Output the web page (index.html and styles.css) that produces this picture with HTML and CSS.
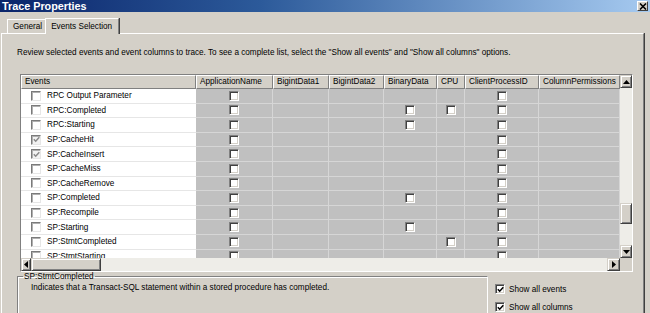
FILE: index.html
```html
<!DOCTYPE html>
<html>
<head>
<meta charset="utf-8">
<link rel="stylesheet" href="styles.css">
</head>
<body>
<div class="window">
  <div class="titlebar">
    <span class="title">Trace Properties</span>
    <span class="close"><svg width="8" height="7" viewBox="0 0 8 7"><path d="M1 0.5 L7 6.5 M7 0.5 L1 6.5" stroke="#000" stroke-width="1.6"/></svg></span>
  </div>
  <div class="tabs">
    <div class="tab">General</div>
    <div class="tab active">Events Selection</div>
  </div>
  <div class="panel">
    <p class="intro">Review selected events and event columns to trace. To see a complete list, select the "Show all events" and "Show all columns" options.</p>
    <div class="grid">
      <div class="grid-top">
        <div class="grid-main">
          <div class="hdr">
            <div class="hc w0">Events</div>
            <div class="hc w1">ApplicationName</div>
            <div class="hc w2">BigintData1</div>
            <div class="hc w3">BigintData2</div>
            <div class="hc w4">BinaryData</div>
            <div class="hc w5">CPU</div>
            <div class="hc w6">ClientProcessID</div>
            <div class="hc w7">ColumnPermissions</div>
          </div>
          <div class="rows">
            <div class="row"><div class="ev w0"><span class="ecb"></span>RPC Output Parameter</div><div class="gc w1"><span class="cb"></span></div><div class="gc w2"></div><div class="gc w3"></div><div class="gc w4"></div><div class="gc w5"></div><div class="gc w6"><span class="cb"></span></div><div class="gc w7"></div></div>
            <div class="row"><div class="ev w0"><span class="ecb"></span>RPC:Completed</div><div class="gc w1"><span class="cb"></span></div><div class="gc w2"></div><div class="gc w3"></div><div class="gc w4"><span class="cb"></span></div><div class="gc w5"><span class="cb"></span></div><div class="gc w6"><span class="cb"></span></div><div class="gc w7"></div></div>
            <div class="row"><div class="ev w0"><span class="ecb"></span>RPC:Starting</div><div class="gc w1"><span class="cb"></span></div><div class="gc w2"></div><div class="gc w3"></div><div class="gc w4"><span class="cb"></span></div><div class="gc w5"></div><div class="gc w6"><span class="cb"></span></div><div class="gc w7"></div></div>
            <div class="row"><div class="ev w0"><span class="ecb on"><svg width="7" height="7" viewBox="0 0 7 7"><path d="M0.8 3.2 L2.7 5.2 L6.3 1.2" fill="none" stroke="#8a8a8a" stroke-width="1.5"/></svg></span>SP:CacheHit</div><div class="gc w1"><span class="cb"></span></div><div class="gc w2"></div><div class="gc w3"></div><div class="gc w4"></div><div class="gc w5"></div><div class="gc w6"><span class="cb"></span></div><div class="gc w7"></div></div>
            <div class="row"><div class="ev w0"><span class="ecb on"><svg width="7" height="7" viewBox="0 0 7 7"><path d="M0.8 3.2 L2.7 5.2 L6.3 1.2" fill="none" stroke="#8a8a8a" stroke-width="1.5"/></svg></span>SP:CacheInsert</div><div class="gc w1"><span class="cb"></span></div><div class="gc w2"></div><div class="gc w3"></div><div class="gc w4"></div><div class="gc w5"></div><div class="gc w6"><span class="cb"></span></div><div class="gc w7"></div></div>
            <div class="row"><div class="ev w0"><span class="ecb"></span>SP:CacheMiss</div><div class="gc w1"><span class="cb"></span></div><div class="gc w2"></div><div class="gc w3"></div><div class="gc w4"></div><div class="gc w5"></div><div class="gc w6"><span class="cb"></span></div><div class="gc w7"></div></div>
            <div class="row"><div class="ev w0"><span class="ecb"></span>SP:CacheRemove</div><div class="gc w1"><span class="cb"></span></div><div class="gc w2"></div><div class="gc w3"></div><div class="gc w4"></div><div class="gc w5"></div><div class="gc w6"><span class="cb"></span></div><div class="gc w7"></div></div>
            <div class="row"><div class="ev w0"><span class="ecb"></span>SP:Completed</div><div class="gc w1"><span class="cb"></span></div><div class="gc w2"></div><div class="gc w3"></div><div class="gc w4"><span class="cb"></span></div><div class="gc w5"></div><div class="gc w6"><span class="cb"></span></div><div class="gc w7"></div></div>
            <div class="row"><div class="ev w0"><span class="ecb"></span>SP:Recompile</div><div class="gc w1"><span class="cb"></span></div><div class="gc w2"></div><div class="gc w3"></div><div class="gc w4"></div><div class="gc w5"></div><div class="gc w6"><span class="cb"></span></div><div class="gc w7"></div></div>
            <div class="row"><div class="ev w0"><span class="ecb"></span>SP:Starting</div><div class="gc w1"><span class="cb"></span></div><div class="gc w2"></div><div class="gc w3"></div><div class="gc w4"><span class="cb"></span></div><div class="gc w5"></div><div class="gc w6"><span class="cb"></span></div><div class="gc w7"></div></div>
            <div class="row"><div class="ev w0"><span class="ecb"></span>SP:StmtCompleted</div><div class="gc w1"><span class="cb"></span></div><div class="gc w2"></div><div class="gc w3"></div><div class="gc w4"></div><div class="gc w5"><span class="cb"></span></div><div class="gc w6"><span class="cb"></span></div><div class="gc w7"></div></div>
            <div class="row"><div class="ev w0"><span class="ecb"></span>SP:StmtStarting</div><div class="gc w1"><span class="cb"></span></div><div class="gc w2"></div><div class="gc w3"></div><div class="gc w4"></div><div class="gc w5"></div><div class="gc w6"><span class="cb"></span></div><div class="gc w7"></div></div>
          </div>
        </div>
        <div class="vscroll">
          <div class="sbtn"><svg width="7" height="4" viewBox="0 0 7 4"><path d="M3.5 0 L7 4 L0 4 Z" fill="#000"/></svg></div>
          <div class="vtrack">
            <div class="vthumb"></div>
          </div>
          <div class="sbtn"><svg width="7" height="4" viewBox="0 0 7 4"><path d="M0 0 L7 0 L3.5 4 Z" fill="#000"/></svg></div>
        </div>
      </div>
      <div class="hscroll">
        <div class="hbar">
          <div class="hbtn"><svg width="4" height="7" viewBox="0 0 4 7"><path d="M4 0 L4 7 L0 3.5 Z" fill="#000"/></svg></div>
          <div class="hthumb"></div>
          <div class="htrack"></div>
          <div class="hbtn"><svg width="4" height="7" viewBox="0 0 4 7"><path d="M0 0 L4 3.5 L0 7 Z" fill="#000"/></svg></div>
        </div>
        <div class="corner"></div>
      </div>
    </div>
    <div class="bottom">
      <fieldset class="group">
        <legend>SP:StmtCompleted</legend>
        <p class="desc">Indicates that a Transact-SQL statement within a stored procedure has completed.</p>
      </fieldset>
      <div class="opts">
        <div class="opt"><span class="ocb"><svg width="7" height="7" viewBox="0 0 7 7"><path d="M0.8 3.2 L2.7 5.2 L6.3 1.2" fill="none" stroke="#000" stroke-width="1.5"/></svg></span>Show all events</div>
        <div class="opt"><span class="ocb"><svg width="7" height="7" viewBox="0 0 7 7"><path d="M0.8 3.2 L2.7 5.2 L6.3 1.2" fill="none" stroke="#000" stroke-width="1.5"/></svg></span>Show all columns</div>
      </div>
    </div>
  </div>
</div>
</body>
</html>
```
FILE: styles.css
```css
html, body {
  margin: 0;
  padding: 0;
  background: #d4d0c8;
}
body {
  width: 650px;
  height: 313px;
  overflow: hidden;
  font-family: "Liberation Sans", Arial, sans-serif;
  font-size: 8.2px;
  color: #000;
}
.window {
  width: 650px;
  height: 313px;
  overflow: hidden;
}
.titlebar {
  height: 12px;
  display: flex;
  align-items: center;
  justify-content: space-between;
  background: linear-gradient(to right, #0a246a 0%, #2c5a9a 40%, #a6caf0 100%);
  padding: 0 2px 0 2px;
}
.title {
  color: #fff;
  font-weight: bold;
  font-size: 10.8px;
  line-height: 12px;
}
.close {
  width: 11px;
  height: 10px;
  box-sizing: border-box;
  background: #d4d0c8;
  border: 1px solid;
  border-color: #fff #404040 #404040 #fff;
  display: flex;
  align-items: center;
  justify-content: center;
}
.tabs {
  height: 21px;
  display: flex;
  align-items: flex-end;
  padding-left: 7px;
  position: relative;
  z-index: 2;
}
.tab {
  height: 13px;
  line-height: 13px;
  padding: 0 3px 0 5px;
  border: 1px solid;
  border-color: #fff #808080 transparent #fff;
  border-bottom: none;
  box-sizing: content-box;
}
.tab.active {
  height: 15px;
  line-height: 15px;
  margin-bottom: -1px;
  margin-left: -1px;
  padding: 0 6px 0 5px;
  background: #d4d0c8;
  box-shadow: 1px 0 0 #404040;
}
.panel {
  margin-left: 1px;
  width: 643px;
  height: 280px;
  box-sizing: border-box;
  border: 1px solid;
  border-bottom: none;
  border-color: #fff #808080 #808080 #fff;
  box-shadow: 1px 0 0 #404040;
  padding: 14px 0 0 15px;
}
.intro {
  margin: 0;
  line-height: 10px;
  white-space: nowrap;
}
.grid {
  margin: 16px 0 0 3px;
  width: 613px;
  box-sizing: border-box;
  border: 1px solid;
  border-color: #808080 #fff #fff #808080;
  box-shadow: inset 1px 1px 0 #404040;
  background: #fff;
}
.grid-top {
  display: flex;
}
.grid-main {
  width: 599px;
}
.hdr {
  display: flex;
  height: 14px;
}
.hc {
  box-sizing: border-box;
  height: 14px;
  line-height: 12px;
  padding-left: 3px;
  background: #d4d0c8;
  border: 1px solid;
  border-color: #fff #808080 #808080 #fff;
  white-space: nowrap;
  overflow: hidden;
}
.w0 { width: 175px; }
.w1 { width: 77px; }
.w2 { width: 56px; }
.w3 { width: 55px; }
.w4 { width: 53px; }
.w5 { width: 28px; }
.w6 { width: 74px; }
.w7 { width: 81px; }
.rows {
  height: 169px;
  overflow: hidden;
  background: #c0c0c0;
}
.row {
  display: flex;
  height: 14.6px;
}
.ev {
  box-sizing: border-box;
  background: #fff;
  border-bottom: 1px solid #e6e6e6;
  display: flex;
  align-items: center;
  padding-left: 10px;
  white-space: nowrap;
}
.gc {
  box-sizing: border-box;
  border-right: 1px solid #d6d6d6;
  border-bottom: 1px solid #d6d6d6;
  display: flex;
  align-items: center;
  justify-content: center;
}
.cb {
  width: 10px;
  height: 10px;
  box-sizing: border-box;
  background: #fff;
  border: 1px solid;
  border-color: #808080 #fff #fff #808080;
  box-shadow: inset 1px 1px 0 #404040, inset -1px -1px 0 #d4d0c8;
}
.ecb {
  width: 10px;
  height: 10px;
  box-sizing: border-box;
  background: #fff;
  border: 1px solid;
  border-color: #7a7a7a #e6e6e6 #e6e6e6 #7a7a7a;
  box-shadow: inset 1px 1px 0 #b0b0b0;
  margin-right: 6px;
  display: flex;
  align-items: center;
  justify-content: center;
  flex: none;
}
.ecb.on {
  background: #f2f2f2;
}
.vscroll {
  width: 12px;
  display: flex;
  flex-direction: column;
  background: #eeede8;
}
.sbtn, .hbtn {
  box-sizing: border-box;
  background: #d4d0c8;
  border: 1px solid;
  border-color: #d4d0c8 #404040 #404040 #d4d0c8;
  box-shadow: inset 1px 1px 0 #fff, inset -1px -1px 0 #808080;
  display: flex;
  align-items: center;
  justify-content: center;
  flex: none;
}
.sbtn {
  width: 12px;
  height: 13px;
}
.vtrack {
  flex: 1;
  padding-top: 115px;
}
.vthumb {
  height: 21px;
  box-sizing: border-box;
  background: #d4d0c8;
  border: 1px solid;
  border-color: #d4d0c8 #404040 #404040 #d4d0c8;
  box-shadow: inset 1px 1px 0 #fff, inset -1px -1px 0 #808080;
}
.hscroll {
  display: flex;
  height: 13px;
}
.hbar {
  width: 599px;
  display: flex;
  background: #eeede8;
}
.hbtn {
  width: 10px;
  height: 13px;
}
.hbtn:last-child {
  width: 13px;
}
.hthumb {
  width: 70px;
  box-sizing: border-box;
  background: #d4d0c8;
  border: 1px solid;
  border-color: #d4d0c8 #404040 #404040 #d4d0c8;
  box-shadow: inset 1px 1px 0 #fff, inset -1px -1px 0 #808080;
}
.htrack {
  flex: 1;
}
.corner {
  width: 12px;
  background: #d4d0c8;
}
.bottom {
  display: flex;
  align-items: flex-start;
}
.group {
  margin: 0;
  width: 471px;
  height: 42px;
  box-sizing: border-box;
  border: 1px solid;
  border-bottom: none;
  border-color: #808080 #fff #fff #808080;
  box-shadow: 1px 1px 0 #fff inset;
  padding: 0 0 0 5px;
  min-width: 0;
}
.group legend {
  padding: 0 1px;
  line-height: 9px;
}
.desc {
  margin: 2px 0 0 8px;
  line-height: 10px;
  white-space: nowrap;
}
.opts {
  margin-left: 7px;
  padding-top: 8px;
}
.opt {
  height: 18px;
  display: flex;
  align-items: center;
  white-space: nowrap;
}
.ocb {
  width: 10px;
  height: 10px;
  box-sizing: border-box;
  background: #fff;
  border: 1px solid;
  border-color: #808080 #fff #fff #808080;
  box-shadow: inset 1px 1px 0 #404040, inset -1px -1px 0 #d4d0c8;
  margin-right: 4px;
  display: flex;
  align-items: center;
  justify-content: center;
}
```
